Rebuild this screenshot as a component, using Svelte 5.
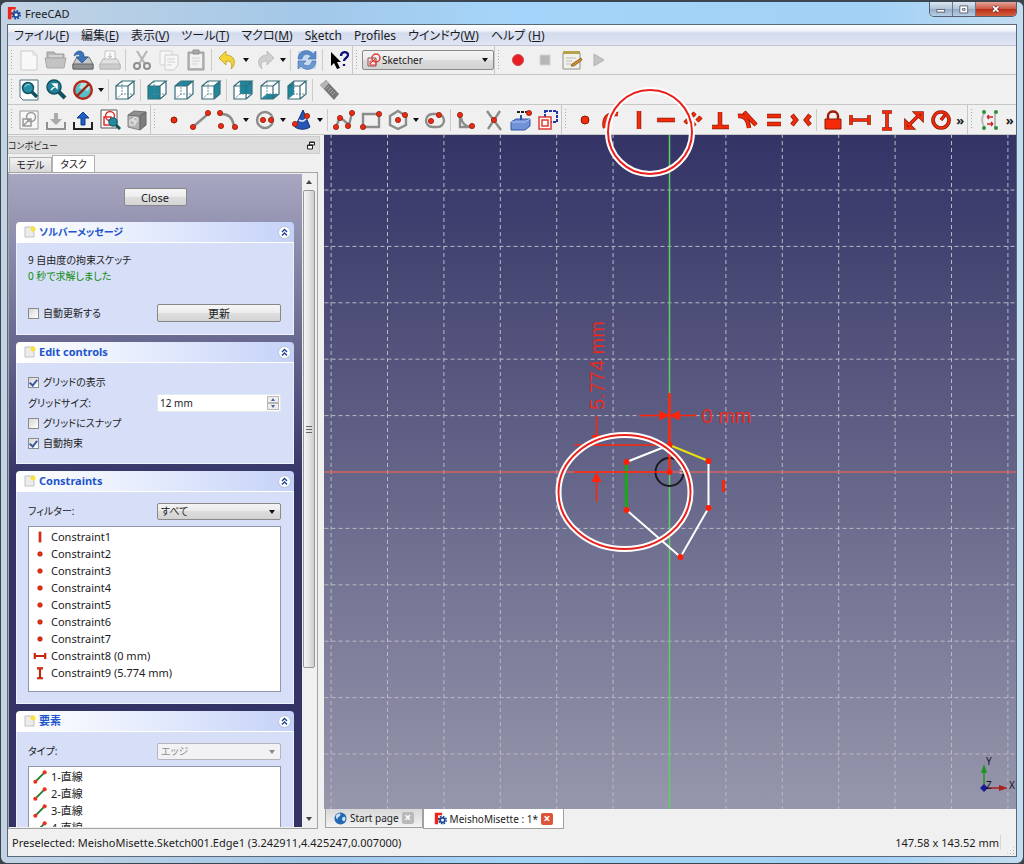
<script lang="ts">
    type Item = { icon: string; label: string; off?: boolean };

    const menus = [
        ["ファイル(", "F", ")"],
        ["編集(", "E", ")"],
        ["表示(", "V", ")"],
        ["ツール(", "T", ")"],
        ["マクロ(", "M", ")"],
        ["S", "k", "etch"],
        ["P", "r", "ofiles"],
        ["ウインドウ(", "W", ")"],
        ["ヘルプ (", "H", ")"],
    ];

    const parse = (text: string): Item[] =>
        text.split(" ").map((t) => {
            const off = t.endsWith("!");
            const icon = off ? t.slice(0, -1) : t;
            return { icon, label: icon, off };
        });

    // "sep" - divider, "drop" - arrow of the previous button, "!" - greyed out
    const fileBar = parse("new! open! save print! sep cut! copy! paste! sep undo drop redo! drop sep refresh sep whats");
    const macroBar = parse("record stop! edit play!");
    const viewBar = parse("fit zoom style drop sep iso sep front top right sep rear bottom left sep measure");
    const sketchBar = parse("sketch leave! export viewsk map!");
    const geomBar = parse("point line arc drop circle drop conic drop sep polyline rect hexagon drop slot sep fillet trim external carbon");
    const constraintBar = parse("c-point c-onobj c-vert c-horiz c-para c-perp c-tang c-equal c-symm sep c-lock c-hdist c-vdist c-len c-radius more");
    const toolsBar = parse("closeshape more");

    const cubes: Record<string, string> = {
        iso: "",
        front: "M3 8h12v13H3z",
        top: "M3 8l6-5h12l-6 5z",
        right: "M15 8l6-5v13l-6 5z",
        rear: "M9 3h12v13H9z",
        bottom: "M3 21l6-5h12l-6 5z",
        left: "M3 8l6-5v13l-6 5z",
    };

    // drawn twice: dark outline, then red core
    const strokes: Record<string, string> = {
        "c-onobj": "M5 20C3 11 7 5 18 6",
        "c-vert": "M12 3v18",
        "c-horiz": "M3 12h18",
        "c-para": "M4 15l4-4M11 8l3-3M10 19l4-4M16 13l4-4",
        "c-perp": "M12 4v15M4 19h17",
        "c-tang": "M3 8c7-1 10 4 11 12M9 4l12 13",
        "c-equal": "M5 8h14M5 16h14",
        "c-symm": "M3 7l4 5-4 5M21 7l-4 5 4 5",
    };

    const dims: Record<string, string> = {
        "c-hdist": "M3 7v10M21 7v10M3 12h18",
        "c-vdist": "M7 4h10M7 21h10M12 4v17",
        "c-len": "M7 17L17 7M14 5h6v6zM10 20H4v-6z",
        "c-radius": "M12 4a8 8 0 1 0 0.100 0M12 12l4-5",
    };

    const constraints = [
        { name: "Constraint1", icon: "c-vert" },
        { name: "Constraint2", icon: "c-point" },
        { name: "Constraint3", icon: "c-point" },
        { name: "Constraint4", icon: "c-point" },
        { name: "Constraint5", icon: "c-point" },
        { name: "Constraint6", icon: "c-point" },
        { name: "Constraint7", icon: "c-point" },
        { name: "Constraint8 (0 mm)", icon: "c-hdist" },
        { name: "Constraint9 (5.774 mm)", icon: "c-vdist" },
    ];
    const elements = ["1-直線", "2-直線", "3-直線", "4-直線"];

    // grid step in view units, origin is the centre of the sketch
    const step = 56.4;
    const gridLines = Array.from({ length: 29 }, (_, i) => i - 14).filter((n) => n !== 0);

    const vertices = [[0, -27], [39, -11], [39, 36], [11, 85], [-43, 38], [-43, -10], [0, 0]];

    let autoUpdate = $state(false);
    let showGrid = $state(true);
    let snap = $state(false);
    let autoConstraints = $state(true);
    let gridSize = $state("12 mm");
</script>

{#snippet ball(x: number, y: number)}
    <circle cx={x} cy={y} r="2.600" fill="#ee2a12" stroke="#8f1a0c" stroke-width=".8" />
{/snippet}

{#snippet appLogo()}
    <svg class="logo" viewBox="0 0 16 16" aria-hidden="true">
        <path d="M1 1h9v3H5v3h3v3H5v5H1z" fill="#f02418" />
        <circle cx="10.500" cy="10" r="4.500" fill="none" stroke="#1c4a9c" stroke-width="2" stroke-dasharray="2 1.500" />
        <circle cx="10.500" cy="10" r="2.800" fill="#fff" stroke="#1c4a9c" stroke-width="2" />
    </svg>
{/snippet}

{#snippet glyph(name: string)}
    <svg class="glyph" viewBox="0 0 24 24" aria-hidden="true">
        {#if name in strokes}
            <path class="edge" d={strokes[name]} />
            <path class="core" d={strokes[name]} />
        {:else if name in dims}
            <path class="edge thin" d={dims[name]} />
            <path class="core thin" d={dims[name]} />
        {:else if name in cubes}
            <path d="M3 8l6-5h12v13l-6 5H3z" fill="#fff" />
            {#if cubes[name]}<path d={cubes[name]} fill="#1e879e" />{/if}
            <path d="M3 8h12v13H3zM3 8l6-5h12l-6 5M21 3v13l-6 5" fill="none" stroke="#356b78" stroke-width="1.200" />
            <path d="M9 3v13h12M9 16l-6 5" fill="none" stroke="#5d858e" stroke-width=".9" stroke-dasharray="2 1" />
        {:else if name === "new"}
            <path d="M4 3h12l4 4v15H4z" fill="#fafafa" stroke="#c4c4c4" /><path d="M16 3v4h4" fill="none" stroke="#ccc" />
        {:else if name === "open"}
            <path d="M3 19V4h7l2 2h8v13z" fill="#aaa" stroke="#888" /><path d="M1 10h21l-2 10H3z" fill="#b8b8b8" stroke="#999" /><path d="M5 8h13" stroke="#eee" />
        {:else if name === "save"}
            <path d="M6 9h12l4 7v5H2v-5z" fill="#c4c6c8" stroke="#777" /><path d="M2 16h20v5H2z" fill="#8d9194" stroke="#666" /><path d="M3 8c1-6 9-7 10-1v2h4l-6 6-6-6h4c0-3-3-3-6-1z" fill="#3b74b8" stroke="#285690" stroke-width=".7" />
        {:else if name === "print"}
            <path d="M7 3h10v10H7z" fill="#fff" stroke="#bbb" /><path d="M5 11h14l3 5v5H2v-5z" fill="#ddd" stroke="#aaa" /><path d="M2 16h20v5H2z" fill="#c4c4c4" stroke="#aaa" /><path d="M12 5v5m-2-2l2 2 2-2" stroke="#aaa" fill="none" />
        {:else if name === "cut"}
            <path d="M7 3l8 13M17 3L9 16" stroke="#aaa" stroke-width="2.200" /><circle cx="7" cy="18" r="3" fill="none" stroke="#777" stroke-width="2" /><circle cx="17" cy="18" r="3" fill="none" stroke="#777" stroke-width="2" />
        {:else if name === "copy"}
            <path d="M3 3h12v14H3z" fill="#f8f8f8" stroke="#ccc" /><path d="M8 7h13v10l-4 5H8z" fill="#f8f8f8" stroke="#c4c4c4" /><path d="M10 11h8m-8 3h8m-8 3h5" stroke="#ccc" />
        {:else if name === "paste"}
            <path d="M4 4h16v18H4z" fill="#a8a8a8" stroke="#888" /><path d="M6 6h12v14H6z" fill="#f2f2f2" /><path d="M9 2h6v4H9z" fill="#999" stroke="#777" /><path d="M8 10h8m-8 3h8m-8 3h6" stroke="#ccc" />
        {:else if name === "undo"}
            <path d="M10 3v4c9 0 11 9 5 14 2-6 0-8-5-8v4L3 10z" fill="#f4d336" stroke="#bb9a1d" stroke-width=".8" />
        {:else if name === "redo"}
            <path d="M14 3v4C5 7 3 16 9 21c-2-6 0-8 5-8v4l7-7z" fill="#c6c6c6" stroke="#aaa" stroke-width=".8" />
        {:else if name === "refresh"}
            <path d="M3 3h18v18H3z" fill="#c9daef" /><path d="M3 11c0-9 11-11 15-5l3-3v8h-8l3-3c-4-3-8-2-9 3z" fill="#5a8aca" stroke="#4470ab" stroke-width=".6" /><path d="M21 13c0 9-11 11-15 5l-3 3v-8h8l-3 3c4 3 8 2 9-3z" fill="#6b99d4" stroke="#4470ab" stroke-width=".6" />
        {:else if name === "whats"}
            <path d="M4 4v14l3-3 3 6 3-1-3-6h4z" fill="#000" /><path d="M14 8c0-5 7-5 7-1 0 3-4 3-4 6m0 3v2" stroke="#10107c" stroke-width="2.300" fill="none" />
        {:else if name === "record"}
            <circle cx="12" cy="12" r="5.500" fill="#e81e22" stroke="#ca4a4a" />
        {:else if name === "stop"}
            <path d="M7 7h10v10H7z" fill="#a8a8a8" stroke="#ccc" />
        {:else if name === "edit"}
            <path d="M3 5h17v16H3z" fill="#f1f1ec" stroke="#8f908a" /><path d="M3 3h17v3H3z" fill="#b3a34c" /><path d="M6 10h10M6 13h6M6 16h5" stroke="#bbb" /><path d="M12 16l9-6 1 2-8 6-3 0z" fill="#d18c2e" stroke="#7a4a12" stroke-width=".7" />
        {:else if name === "play"}
            <path d="M7 6l10 6-10 6z" fill="#b8b8b8" stroke="#a5a5a5" />
        {:else if name === "fit"}
            <path d="M3 2h18v20H6l-3-3z" fill="#fff" stroke="#4b7580" /><circle cx="11" cy="10" r="5.500" fill="#2590a8" stroke="#14515f" stroke-width="1.500" /><path d="M15 14l5 5" stroke="#14515f" stroke-width="3.500" /><path d="M8 9c1-3 4-3 5-2" stroke="#bce4ec" fill="none" />
        {:else if name === "zoom"}
            <circle cx="10" cy="9" r="7" fill="#1e7f97" stroke="#14515f" stroke-width="1.500" /><path d="M15 14l6 6" stroke="#14515f" stroke-width="4" /><path d="M7 12l5-5M9 6h4v4z" fill="#fff" stroke="#fff" stroke-width="1.500" />
        {:else if name === "style"}
            <circle cx="12" cy="13" r="8" fill="#56c0cb" /><path d="M12 2l8 5-3 6-9-3z" fill="#b2e3df" /><circle cx="12" cy="12" r="8.800" fill="none" stroke="#b22a1c" stroke-width="2.400" /><path d="M6 18L18 6" stroke="#9d2015" stroke-width="2.400" />
        {:else if name === "measure"}
            <path d="M3 7l6-5 13 14-5 6z" fill="#777" /><path d="M3 7l6-5 3 3-5 6z" fill="#b4b4b4" /><path d="M12 8l-3 3m5-1l-3 3m5-1l-3 3m5-1l-3 3" stroke="#a8a8a8" />
        {:else if name === "sketch"}
            <path d="M3 3h18v18H3z" fill="#f8f8f8" stroke="#999" /><circle cx="14" cy="9" r="4.500" fill="none" stroke="#999" stroke-width="1.500" /><path d="M6 11h8v7H6zM6 18l7-7" fill="none" stroke="#999" stroke-width="1.500" />
        {:else if name === "leave"}
            <path d="M3 14v7h18v-7" fill="none" stroke="#777" stroke-width="2" /><path d="M10 5h4v6h4l-6 6-6-6h4z" fill="#999" />
        {:else if name === "export"}
            <path d="M3 14v7h18v-7" fill="none" stroke="#222" stroke-width="2" /><path d="M12 4l6 6h-4v7h-4v-7H6z" fill="#1f5ec4" stroke="#123c86" />
        {:else if name === "viewsk"}
            <path d="M3 2h16v18H3z" fill="#fff" stroke="#555" /><circle cx="12" cy="8" r="4.500" fill="none" stroke="#e03030" stroke-width="1.500" /><path d="M6 9h7v8H6z" fill="none" stroke="#e03030" stroke-width="1.500" /><circle cx="15" cy="14" r="4.200" fill="#2189a0" stroke="#14515f" /><path d="M18 17l4 4" stroke="#14515f" stroke-width="3" />
        {:else if name === "map"}
            <path d="M3 7l12 1v14L3 19z" fill="#a5a5a5" stroke="#666" /><path d="M3 7l6-4 12 1-6 4z" fill="#777" stroke="#555" /><path d="M15 8l6-4v13l-6 5z" fill="#606060" stroke="#444" /><circle cx="10" cy="12" r="2.500" fill="none" stroke="#eee" /><path d="M5 12h5v5H5z" fill="none" stroke="#eee" />
        {:else if name === "point"}
            <circle cx="12" cy="12" r="3" fill="#ee2a12" stroke="#8f1a0c" />
        {:else if name === "line"}
            <path d="M5 18L19 6" class="wire" />{@render ball(4, 19)}{@render ball(19, 5)}
        {:else if name === "arc"}
            <path d="M4 6q12-1 14 12" class="wire" />{@render ball(4, 5)}{@render ball(19, 19)}{@render ball(5, 18)}
        {:else if name === "circle"}
            <circle cx="12" cy="12" r="8" class="wire" />{@render ball(10, 12)}{@render ball(18, 12)}
        {:else if name === "conic"}
            <path d="M13 2l7 17c-4 3-11 3-15 0z" fill="#2757b4" stroke="#15306e" /><path d="M9 12q5 3 8-3" fill="none" stroke="#e8eefc" stroke-width="1.500" />{@render ball(5, 16)}{@render ball(17, 8)}
        {:else if name === "polyline"}
            <path d="M4 19l4-10 9 8 3-12" class="wire" />{@render ball(4, 19)}{@render ball(8, 10)}{@render ball(16, 18)}{@render ball(20, 5)}
        {:else if name === "rect"}
            <path d="M4 6h16v13H4z" class="wire" />{@render ball(4, 19)}{@render ball(20, 6)}
        {:else if name === "hexagon"}
            <path d="M12 3l8 5v9l-8 4-8-4V8z" class="wire" />{@render ball(12, 12)}{@render ball(19, 7)}
        {:else if name === "slot"}
            <rect x="3" y="6" width="18" height="13" rx="6.500" class="wire" />{@render ball(8, 13)}{@render ball(16, 7)}
        {:else if name === "fillet"}
            <path d="M5 4v15h14M6 10q2 8 9 9" class="wire" />{@render ball(5, 7)}{@render ball(17, 18)}
        {:else if name === "trim"}
            <path d="M5 3l14 19M18 3L6 21" class="wire" />{@render ball(12, 12)}
        {:else if name === "external"}
            <path d="M2 14l5-3h14v7l-5 4H2z" fill="#7292d8" stroke="#3354a8" /><path d="M2 14h14l5-3" fill="none" stroke="#a9c0f0" /><path d="M12 12V7" stroke="#2f4fa0" stroke-width="2" /><path d="M8 4h12" stroke="#222" stroke-width="2" stroke-dasharray="3 1" />{@render ball(20, 5)}
        {:else if name === "carbon"}
            <path d="M9 3h12v11H9z" fill="none" stroke="#2234a8" stroke-width="2" stroke-dasharray="3 1" /><path d="M3 9h12v12H3zM6 12h6v6H6z" fill="#fff" stroke="#e23a30" stroke-width="1.500" />
        {:else if name === "c-point"}
            <circle cx="12" cy="12" r="4" fill="#ee2a0a" stroke="#8f1a0c" />
        {:else if name === "c-lock"}
            <path d="M7 11V8c0-6 10-6 10 0v3" fill="none" stroke="#a01e0c" stroke-width="2.500" /><path d="M4 11h16v10H4z" fill="#f52a08" stroke="#8c1c0c" />
        {:else if name === "closeshape"}
            <path d="M7 4q-6 8 0 16M17 4v16" fill="none" stroke="#bbb" stroke-width="2" /><path d="M9 9h6m-6 0l2-2m-2 2l2 2M15 16H9m6 0l-2-2m2 2l-2 2" stroke="#c22" stroke-width="1.300" fill="none" />
            {#each [[6, 4], [18, 4], [6, 20], [18, 20]] as [x, y]}<circle cx={x} cy={y} r="2" fill="#2f8f35" />{/each}
        {:else if name === "edge"}
            <path d="M5 19L19 5" stroke="#1c7a2c" stroke-width="3" />
            <circle cx="4" cy="20" r="3.500" fill="#ee3020" /><circle cx="20" cy="4" r="3.500" fill="#ee3020" />
        {/if}
    </svg>
{/snippet}

{#snippet tools(items: Item[])}
    {#each items as item}
        {#if item.icon === "sep"}
            <span class="sep"></span>
        {:else if item.icon === "drop"}
            <button class="drop" aria-label="menu"><i></i></button>
        {:else if item.icon === "more"}
            <button class="more">»</button>
        {:else}
            <button class="tool" aria-label={item.label} disabled={item.off}>{@render glyph(item.icon)}</button>
        {/if}
    {/each}
{/snippet}

{#snippet boxHead(title: string, kana = false)}
    <header>
        <svg class="note" viewBox="0 0 12 12" aria-hidden="true">
            <path d="M1 1h9v10H1z" fill="#ececec" stroke="#c2c2c2" />
            <circle cx="9" cy="3" r="2.500" fill="#f7e53c" />
        </svg>
        <h2 class:kana>{title}</h2>
        <button class="fold" aria-label="fold">
            <svg viewBox="0 0 13 13"><circle cx="6.500" cy="6.500" r="6" fill="#fff" stroke="#b5c0dd" /><path d="M4 6l2.500-2.500L9 6M4 9.500L6.500 7 9 9.500" fill="none" stroke="#1b3f96" stroke-width="1.300" /></svg>
        </button>
    </header>
{/snippet}

<div class="window">
    <div class="titlebar">
        {@render appLogo()}
        <span class="caption">FreeCAD</span>
        <div class="winbuttons">
            <button aria-label="minimize"><svg viewBox="0 0 20 16"><rect x="5.500" y="8.500" width="9" height="3" fill="#fff" stroke="#555b6a" /></svg></button>
            <button aria-label="maximize"><svg viewBox="0 0 20 16"><path d="M5.500 4.500h9v8h-9zM8.500 7.500h3v2h-3z" fill="#fff" stroke="#555b6a" /></svg></button>
            <button class="quit" aria-label="close"><svg viewBox="0 0 20 16"><path d="M7 5l6 6M13 5l-6 6" stroke="#6b2a25" stroke-width="4" /><path d="M7 5l6 6M13 5l-6 6" stroke="#fff" stroke-width="2.200" /></svg></button>
        </div>
    </div>

    <div class="client">
        <nav class="menubar">
            {#each menus as [before, key, after]}
                <button>{before}<u>{key}</u>{after}</button>
            {/each}
        </nav>

        <div class="toolbar">
            <span class="grip"></span>
            {@render tools(fileBar)}
            <span class="grip next"></span>
            <label class="combo workbench">
                <svg class="wbicon" viewBox="0 0 14 14" aria-hidden="true"><path d="M1 5h8v8H1z" fill="#eee" stroke="#8a5050" /><circle cx="9" cy="5" r="4" fill="none" stroke="#e43a34" stroke-width="1.500" /><path d="M3 11l6-6M3 8h6v4H3z" fill="none" stroke="#e43a34" /></svg>
                <select aria-label="workbench"><option>Sketcher</option></select>
                <i></i>
            </label>
            <span class="grip next"></span>
            {@render tools(macroBar)}
        </div>
        <div class="toolbar">
            <span class="grip"></span>
            {@render tools(viewBar)}
        </div>
        <div class="toolbar">
            <span class="grip"></span>
            {@render tools(sketchBar)}
            <span class="grip next"></span>
            {@render tools(geomBar)}
            <span class="grip next"></span>
            {@render tools(constraintBar)}
            <span class="grip next"></span>
            {@render tools(toolsBar)}
        </div>

        <main>
            <aside>
                <div class="docktitle">
                    <span>コンボビュー</span>
                    <button aria-label="float"><svg viewBox="0 0 9 9"><path d="M2.500 1v3h5V1zM.5 4v4h5V4z" fill="#fff" stroke="#222" /><path d="M2 1.500h6M0 4.500h6" stroke="#222" /></svg></button>
                </div>
                <div class="tabs">
                    <button>モデル</button>
                    <button class="active">タスク</button>
                </div>
                <div class="pane">
                    <div class="tasks">
                        <button class="push close">Close</button>

                        <section>
                            {@render boxHead("ソルバーメッセージ", true)}
                            <div class="body solver">
                                <p>9 自由度の拘束スケッチ</p>
                                <p class="ok">0 秒で求解しました</p>
                                <div class="row">
                                    <label class="check"><input type="checkbox" bind:checked={autoUpdate} />自動更新する</label>
                                    <button class="push">更新</button>
                                </div>
                            </div>
                        </section>

                        <section>
                            {@render boxHead("Edit controls")}
                            <div class="body controls">
                                <label class="check"><input type="checkbox" bind:checked={showGrid} />グリッドの表示</label>
                                <div class="row">
                                    <label for="gridsize">グリッドサイズ:</label>
                                    <div class="spin">
                                        <input id="gridsize" type="text" bind:value={gridSize} />
                                        <span>
                                            <button aria-label="up"><i class="up"></i></button>
                                            <button aria-label="down"><i></i></button>
                                        </span>
                                    </div>
                                </div>
                                <label class="check"><input type="checkbox" bind:checked={snap} />グリッドにスナップ</label>
                                <label class="check"><input type="checkbox" bind:checked={autoConstraints} />自動拘束</label>
                            </div>
                        </section>

                        <section>
                            {@render boxHead("Constraints")}
                            <div class="body">
                                <div class="row">
                                    <label for="filter">フィルター:</label>
                                    <div class="combo">
                                        <select id="filter"><option>すべて</option></select>
                                        <i></i>
                                    </div>
                                </div>
                                <ul>
                                    {#each constraints as c}
                                        <li>{@render glyph(c.icon)}{c.name}</li>
                                    {/each}
                                </ul>
                            </div>
                        </section>

                        <section>
                            {@render boxHead("要素")}
                            <div class="body">
                                <div class="row">
                                    <label for="kind">タイプ:</label>
                                    <div class="combo off">
                                        <select id="kind" disabled><option>エッジ</option></select>
                                        <i></i>
                                    </div>
                                </div>
                                <ul>
                                    {#each elements as name}
                                        <li>{@render glyph("edge")}{name}</li>
                                    {/each}
                                </ul>
                            </div>
                        </section>
                    </div>
                    <div class="scrollbar">
                        <button aria-label="scroll up"><i class="up"></i></button>
                        <div class="rail"><div class="thumb"><b></b></div></div>
                        <button aria-label="scroll down"><i></i></button>
                    </div>
                </div>
            </aside>

            <div class="mdi">
                <div class="view">
                    <svg class="scene" viewBox="-346 -337 693 674" preserveAspectRatio="xMidYMid slice">
                        {#each gridLines as n}
                            <line class="grid" x1={n * step} x2={n * step} y1="-800" y2="800" />
                            <line class="grid" y1={n * step} y2={n * step} x1="-800" x2="800" />
                        {/each}
                        <line x1="-800" x2="800" y1="0" y2="0" stroke="#d9625f" stroke-width="1.500" />
                        <line x1="0" x2="0" y1="-800" y2="800" stroke="#5fcf5f" stroke-width="1.500" />

                        <circle r="14" fill="none" stroke="#1a1a22" stroke-width="2" />
                        <path d="M-43-10L0-27M39-11V36L11 85L-43 38" fill="none" stroke="#fff" stroke-width="2" />
                        <path d="M0-27L39-11" stroke="#e8e010" stroke-width="2" />
                        <path d="M-43-10V38" stroke="#18a818" stroke-width="3" />
                        <path d="M10-2h4M10 1h4" stroke="#fcc" />

                        <g stroke="#ff2408" stroke-width="1.500" fill="#ff2408">
                            <path d="M-95-27H0M-95 0H0M-30-56.500H27M-73-56v24M-73 8v22" fill="none" />
                            <path d="M0-79V0" stroke-width="2.500" />
                            <path d="M0-56.500l-10-5v10zM0-56.500l10-5v10zM-73-27l-5-10h10zM-73 0l-5 10h10z" stroke="none" />
                            <path d="M54 8v12" stroke-width="3" />
                        </g>
                        <text x="32" y="-49">0 mm</text>
                        <text transform="translate(-66 -62) rotate(-90)">5.774 mm</text>
                        {#each vertices as [x, y]}
                            <circle cx={x} cy={y} r="3" fill="#ff1e08" />
                        {/each}

                        <g class="mark">
                            <ellipse cx="-45" cy="20" rx="66" ry="57" />
                            <ellipse cx="-45" cy="20" rx="66" ry="57" />
                        </g>
                    </svg>
                    <svg class="triad" viewBox="0 0 44 44">
                        <path d="M12 34h18" stroke="#a82222" stroke-width="1.500" /><path d="M27 31l9 3-9 3z" fill="#a82222" />
                        <path d="M12 34V17" stroke="#1c941c" stroke-width="1.500" /><path d="M9 19l3-9 3 9z" fill="#1c941c" />
                        <path d="M12 30l4 4-4 4-4-4z" fill="#1a1a98" />
                        <text x="14" y="11">Y</text><text x="14" y="35">Z</text><text x="37" y="35">X</text>
                    </svg>
                    <svg class="callout mark" viewBox="0 0 90 90">
                        <circle cx="45" cy="45" r="42" />
                        <circle cx="45" cy="45" r="42" />
                    </svg>
                </div>
                <div class="doctabs">
                    <div class="doctab">
                        <svg class="globe" viewBox="0 0 14 14" aria-hidden="true"><circle cx="7" cy="7" r="6.500" fill="#2468b4" /><path d="M2 4c2-3 5-3 5-1 0 2-3 2-3 4s-2 0-2-3M9 6c3-2 4 0 3 3-1 2-4 1-3-3" fill="#cfe6f8" /></svg>
                        <button class="name">Start page</button>
                        <button class="x" aria-label="close tab">×</button>
                    </div>
                    <div class="doctab active">
                        {@render appLogo()}
                        <button class="name">MeishoMisette : 1*</button>
                        <button class="x" aria-label="close tab">×</button>
                    </div>
                </div>
            </div>
        </main>

        <footer>
            <span>Preselected: MeishoMisette.Sketch001.Edge1 (3.242911,4.425247,0.007000)</span>
            <span class="size">147.58 x 143.52 mm</span>
            <span class="resize"></span>
        </footer>
    </div>
</div>

<style>
    :global(body) {
        margin: 0;
        background: #3a4446;
    }

    .window {
        box-sizing: border-box;
        height: 100vh;
        min-height: 480px;
        display: flex;
        flex-direction: column;
        padding: 0 6px 6px;
        border: 1px solid #3b4650;
        border-top-width: 2px;
        border-radius: 7px;
        overflow: hidden;
        background: linear-gradient(90deg, #c3d3e4, #a3c8e8 30%, #a5d4fa 50%, #a2d1f5 85%, #c3dcf0);
        font-family: "Noto Sans", "Noto Sans CJK JP", sans-serif;
        font-size: 11px;
        font-feature-settings: "palt";
        color: #1c1c1c;
    }

    button, select, input {
        font: inherit;
        color: inherit;
        font-feature-settings: inherit;
    }

    button {
        padding: 0;
        border: 0;
        background: none;
    }

    i {
        width: 0;
        height: 0;
        border: 3px solid transparent;
        border-top: 4px solid #111;
        border-bottom: 0;
    }

    i.up {
        border-top: 0;
        border-bottom: 4px solid #444;
    }

    .titlebar {
        flex: none;
        display: flex;
        align-items: center;
        gap: 4px;
        height: 22px;
    }

    .logo {
        width: 14px;
        height: 14px;
    }

    .winbuttons {
        display: flex;
        align-self: flex-start;
        margin-left: auto;
        border: 1px solid #555f70;
        border-top: 0;
        border-radius: 0 0 5px 5px;
        overflow: hidden;
    }

    .winbuttons button {
        width: 23px;
        height: 14px;
        border-right: 1px solid #6b7688;
        background: linear-gradient(#dbe6f0, #b0c2d6 50%, #93abc4 50%, #b8cfe4);
    }

    .winbuttons .quit {
        width: 40px;
        border: 0;
        background: linear-gradient(#e3a498, #cd5644 50%, #b92b14 50%, #d2603e);
    }

    .winbuttons svg {
        display: block;
        height: 14px;
        margin: 0 auto;
    }

    .client {
        flex: 1;
        min-height: 0;
        display: flex;
        flex-direction: column;
        border: 1px solid #59697a;
        background: #f0f0f0;
    }

    .menubar {
        flex: none;
        display: flex;
        gap: 12px;
        height: 20px;
        padding-left: 6px;
        border-bottom: 1px solid #c2c6d4;
        background: linear-gradient(#fff, #eef1f9 30%, #d4dbed 40%, #dfe5f4);
        font-size: 12px;
    }

    .toolbar {
        flex: none;
        display: flex;
        align-items: center;
        height: 28px;
        border-bottom: 1px solid #c6c6c6;
    }

    .toolbar + .toolbar {
        height: 29px;
    }

    .grip {
        flex: none;
        box-sizing: border-box;
        width: 7px;
        height: 100%;
        padding: 4px 1px 4px 3px;
        background: radial-gradient(circle, #aaa 1px, transparent 1px) 2px 3px / 3px 3px;
        background-clip: content-box;
    }

    .grip.next {
        width: 10px;
        padding-right: 3px;
        border-left: 1px solid #c6c6c6;
    }

    .tool {
        flex: none;
        display: grid;
        place-items: center;
        width: 27px;
        height: 26px;
    }

    .tool:disabled {
        opacity: 0.8;
    }

    .glyph {
        width: 24px;
        height: 24px;
    }

    .edge, .core {
        fill: none;
        stroke: #8c1c0c;
        stroke-width: 4.5;
    }

    .core {
        stroke: #f52a08;
        stroke-width: 3;
    }

    .edge.thin {
        stroke-width: 3.6;
    }

    .core.thin {
        stroke-width: 2;
    }

    .wire {
        fill: none;
        stroke: #8a8d8a;
        stroke-width: 2.4;
    }

    .drop {
        flex: none;
        display: grid;
        place-items: center;
        width: 10px;
        height: 20px;
    }

    .more {
        width: 16px;
        font-weight: 700;
        font-size: 13px;
    }

    .sep {
        flex: none;
        box-sizing: border-box;
        width: 5px;
        height: 22px;
        border-left: 2px solid #f0f0f0;
        background: linear-gradient(90deg, #cbcbcb 1px, transparent 1px);
    }

    .combo {
        box-sizing: border-box;
        display: flex;
        align-items: center;
        height: 17px;
        padding: 0 5px 0 3px;
        border: 1px solid #8a8a8a;
        border-radius: 2px;
        background: linear-gradient(#f4f4f4, #eaeaea 50%, #dcdcdc 50%, #d2d2d2);
    }

    .combo select {
        flex: 1;
        min-width: 0;
        padding: 0;
        border: 0;
        appearance: none;
        background: none;
        line-height: 15px;
    }

    .combo.off {
        border-color: #b4b4bc;
        background: #f2f2f4;
        color: #8e8e8e;
    }

    .combo.off select {
        opacity: 1;
    }

    .combo.off i {
        border-top-color: #888;
    }

    .workbench {
        width: 132px;
        height: 20px;
        padding-left: 4px;
        gap: 1px;
        font-size: 10px;
    }

    .wbicon {
        width: 14px;
        height: 14px;
    }

    main {
        flex: 1;
        min-height: 0;
        display: flex;
        gap: 4px;
    }

    aside {
        flex: none;
        width: 312px;
        display: flex;
        flex-direction: column;
    }

    .docktitle {
        display: flex;
        justify-content: space-between;
        align-items: center;
        height: 16px;
        margin-top: 1px;
        padding-right: 3px;
        border: 1px solid #ccc;
        border-left: 0;
        background: #dcdcdc;
        font-size: 9px;
    }

    .docktitle svg {
        display: block;
        width: 9px;
        height: 9px;
    }

    .tabs {
        display: flex;
        align-items: flex-end;
        height: 18px;
        margin-left: 1px;
        font-size: 10px;
    }

    .tabs button {
        width: 43px;
        height: 15px;
        line-height: 14px;
        border: 1px solid #b0b0b0;
        border-bottom: 0;
        background: linear-gradient(#f2f2f2, #d8d8d8);
    }

    .tabs .active {
        height: 17px;
        background: #fff;
    }

    .pane {
        flex: 1;
        min-height: 0;
        display: flex;
        margin-right: 2px;
        padding: 1px 1px 1px 0;
        border: 1px solid #a4a4a4;
    }

    .tasks {
        flex: 1;
        min-width: 0;
        min-height: 0;
        display: flex;
        flex-direction: column;
        gap: 7px;
        padding: 14px 8px 0 7px;
        overflow: hidden;
        background: linear-gradient(#a7a7c1, #333366 310px);
    }

    .push {
        height: 18px;
        border: 1px solid #888;
        border-radius: 2px;
        background: linear-gradient(#f6f6f6, #ececec 50%, #dedede 50%, #d4d4d4);
        font-size: 11px;
        line-height: 15px;
    }

    .push.close {
        flex: none;
        align-self: center;
        width: 63px;
        margin-bottom: 9px;
    }

    section {
        flex: none;
    }

    section header {
        display: flex;
        align-items: center;
        gap: 3px;
        height: 20px;
        padding: 0 3px 0 8px;
        border-bottom: 1px solid #fff;
        border-radius: 4px 4px 0 0;
        background: linear-gradient(90deg, #fff, #e7edfc 45%, #c5d2f8);
    }

    .note {
        width: 12px;
        height: 12px;
    }

    h2 {
        flex: 1;
        margin: 0;
        font-size: 11px;
        line-height: 16px;
        font-weight: 700;
        color: #1c55cd;
    }

    h2.kana {
        font-size: 10px;
    }

    .fold svg {
        display: block;
        width: 13px;
        height: 13px;
    }

    .body {
        display: flex;
        flex-direction: column;
        gap: 6px;
        padding: 11px 12px 11px 11px;
        border: 1px solid #eef2fc;
        border-top: 0;
        background: #d6dff7;
        font-size: 10px;
        line-height: 17px;
    }

    .body.solver {
        gap: 0;
        padding-top: 9px;
        padding-bottom: 12px;
        line-height: 16px;
    }

    .solver p {
        margin: 0;
    }

    .solver .row {
        margin-top: 20px;
    }

    .solver .ok {
        color: #0c8a0c;
    }

    .body.controls {
        gap: 3px;
    }

    .row {
        display: grid;
        grid-template-columns: 129px minmax(0, 1fr);
        align-items: center;
    }

    .check {
        display: flex;
        align-items: center;
        gap: 4px;
    }

    .check input {
        appearance: none;
        box-sizing: border-box;
        width: 11px;
        height: 11px;
        margin: 0;
        border: 1px solid #8b8b8b;
        background: linear-gradient(135deg, #d6d6d6, #fff);
    }

    .check input:checked::after {
        content: "";
        box-sizing: border-box;
        display: block;
        width: 5px;
        height: 8px;
        margin: 0 2px;
        border: solid #3a5aa4;
        border-width: 0 2px 2px 0;
        transform: rotate(40deg);
    }

    .spin {
        display: flex;
        height: 16px;
        border: 1px solid #e3e9ee;
        background: #fff;
    }

    .spin input {
        flex: 1;
        width: 0;
        min-width: 0;
        padding: 0 2px;
        border: 0;
        background: none;
    }

    .spin span {
        flex: none;
        display: flex;
        flex-direction: column;
        width: 12px;
        padding: 1px;
    }

    .spin button {
        flex: 1;
        display: grid;
        place-items: center;
        border: 1px solid #b8b8b8;
        background: #eee;
    }

    .spin i {
        border-width: 3px 2px 0;
        border-top-color: #4a62a0;
    }

    .spin i.up {
        border-width: 0 2px 3px;
        border-bottom-color: #4a62a0;
    }

    ul {
        box-sizing: border-box;
        height: 166px;
        margin: 0;
        padding: 1px 4px;
        border: 1px solid #8f97a8;
        overflow: hidden;
        background: #fff;
        list-style: none;
        font-size: 11px;
    }

    li {
        display: flex;
        align-items: center;
        gap: 4px;
        height: 17px;
    }

    li .glyph {
        width: 14px;
        height: 14px;
    }

    .scrollbar {
        display: flex;
        flex-direction: column;
        width: 14px;
        background: #f0f0f0;
    }

    .scrollbar button {
        display: grid;
        place-items: center;
        height: 16px;
    }

    .scrollbar i {
        border-top-color: #444;
    }

    .rail {
        flex: 1;
    }

    .thumb {
        box-sizing: border-box;
        display: grid;
        place-items: center;
        height: 77%;
        margin: 0 1px;
        border: 1px solid #979797;
        border-radius: 2px;
        background: linear-gradient(90deg, #f5f5f5, #e4e4e4 50%, #cfcfcf);
    }

    .thumb b {
        width: 6px;
        height: 7px;
        background: repeating-linear-gradient(#666 0 1px, transparent 1px 3px);
    }

    .mdi {
        flex: 1;
        min-width: 0;
        display: flex;
        flex-direction: column;
    }

    .view {
        position: relative;
        flex: 1;
        min-height: 0;
        background: linear-gradient(#333366, #9696ac);
    }

    .scene {
        position: absolute;
        width: 100%;
        height: 100%;
    }

    .grid {
        stroke: #b9b9c4;
        stroke-width: 1;
        stroke-dasharray: 4 3;
    }

    .scene text {
        font-family: "Liberation Sans", sans-serif;
        font-size: 20px;
        fill: #e82a1c;
    }

    .mark ellipse, .mark circle {
        fill: none;
        stroke: #fff;
        stroke-width: 6;
    }

    .mark :last-child {
        stroke: #e8201c;
        stroke-width: 2;
    }

    /* the callout reaches up over the toolbar */
    .callout {
        position: absolute;
        top: -48px;
        left: calc(50% - 65px);
        width: 90px;
        height: 90px;
        pointer-events: none;
    }

    .triad {
        position: absolute;
        right: 0;
        bottom: 11px;
        width: 44px;
        height: 44px;
        overflow: visible;
    }

    .triad text {
        font-size: 10px;
        fill: #15151f;
    }

    .doctabs {
        display: flex;
        align-items: flex-start;
        height: 20px;
        padding-left: 1px;
        font-size: 10px;
    }

    .doctab {
        box-sizing: border-box;
        display: flex;
        align-items: center;
        gap: 3px;
        height: 19px;
        padding: 0 8px;
        border: 1px solid #a0a0a0;
        border-top: 0;
        background: linear-gradient(#d8d8d8, #f2f2f2);
    }

    .doctab.active {
        height: 20px;
        padding: 0 10px;
        background: #fff;
    }

    .doctab .logo, .globe {
        width: 13px;
        height: 13px;
    }

    .doctab .x {
        display: grid;
        place-items: center;
        width: 12px;
        height: 12px;
        border-radius: 2px;
        background: #b9b9b9;
        color: #fff;
        font-size: 12px;
        font-weight: 700;
        line-height: 12px;
    }

    .doctab.active .x {
        background: #dd5538;
    }

    footer {
        flex: none;
        display: flex;
        align-items: center;
        height: 27px;
        padding-left: 4px;
    }

    .size {
        margin-left: auto;
        padding-right: 1px;
        border-right: 1px solid #d6d6d6;
    }

    .resize {
        align-self: flex-end;
        width: 9px;
        height: 9px;
        margin: 0 1px 1px 5px;
        clip-path: polygon(100% 0, 100% 100%, 0 100%);
        background: radial-gradient(circle, #aaa 1px, transparent 1px) 0 0 / 3px 3px;
    }
</style>
